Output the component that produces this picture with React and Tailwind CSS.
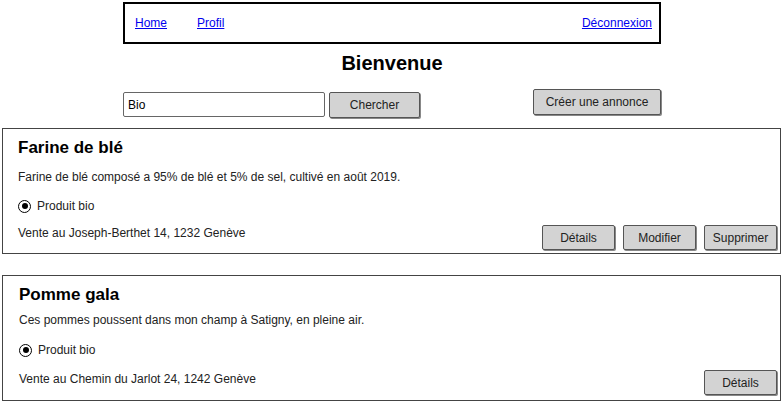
const ANNONCES = [
  {
    id: 1,
    title: "Farine de blé",
    text: "Farine de blé composé a 95% de blé et 5% de sel, cultivé en août 2019.",
    address: "Vente au Joseph-Berthet 14, 1232 Genève",
    owner: true,
    sp: { pl: "pl-[15px]", desc: "mt-[10px]", radio: "mt-[11px]", row: "mt-[9px]", addr: "mb-[8px]", pb: "pb-[3px]" },
  },
  {
    id: 2,
    title: "Pomme gala",
    text: "Ces pommes poussent dans mon champ à Satigny, en pleine air.",
    address: "Vente au Chemin du Jarlot 24, 1242 Genève",
    owner: false,
    sp: { pl: "pl-[16px]", desc: "mt-[6px]", radio: "mt-[12px]", row: "mt-[11px]", addr: "mb-[7px]", pb: "pb-[5px]" },
  },
];

function Btn({ children, className = "" }) {
  return (
    <button className={`h-[25px] bg-[#d3d3d3] border border-[#555] rounded-[2px] text-[12px] text-[#222] shadow-[1px_1px_0_#888] ${className}`}>
      {children}
    </button>
  );
}

function Radio() {
  return (
    <span className="w-[13px] h-[13px] rounded-full border-[1.5px] border-black flex items-center justify-center shrink-0">
      <span className="w-[6px] h-[6px] rounded-full bg-black" />
    </span>
  );
}

function Card({ a }) {
  const s = a.sp;
  return (
    <div className={`ml-[2px] w-[779px] border border-[#444] pr-[3px] pt-[9px] ${s.pl} ${s.pb}`}>
      <h2 className="text-[17px] font-bold leading-[20px] text-black">{a.title}</h2>
      <p className={`${s.desc} leading-[18px] text-[12px] text-[#222]`}>{a.text}</p>
      <div className={`${s.radio} flex items-center gap-[6px] leading-[18px] text-[12px] text-[#222]`}>
        <Radio />
        <span>Produit bio</span>
      </div>
      <div className={`${s.row} flex items-end justify-between`}>
        <p className={`${s.addr} leading-[18px] text-[12px] text-[#222]`}>{a.address}</p>
        <div className="flex gap-[8px]">
          <Btn className="w-[73px]">Détails</Btn>
          {a.owner && <Btn className="w-[73px]">Modifier</Btn>}
          {a.owner && <Btn className="w-[73px]">Supprimer</Btn>}
        </div>
      </div>
    </div>
  );
}

export default function App() {
  return (
    <div className="w-[784px] h-[405px] bg-white overflow-hidden font-['Liberation_Sans',Arial,sans-serif]">
      <div className="w-[538px] mx-auto pt-[2px]">
        <nav className="h-[42px] border-2 border-black flex items-center pl-[10px] pr-[7px] text-[12px]">
          <a href="#" className="text-[#0000ee] underline">Home</a>
          <a href="#" className="ml-[30px] text-[#0000ee] underline">Profil</a>
          <a href="#" className="ml-auto text-[#0000ee] underline">Déconnexion</a>
        </nav>
        <h1 className="mt-[6px] text-center text-[20px] font-bold leading-[26px] text-black">Bienvenue</h1>
        <div className="mt-[13px] flex items-start">
          <input
            defaultValue="Bio"
            className="mt-[3px] w-[202px] h-[25px] border border-[#666] rounded-[2px] px-[4px] text-[12px] text-black outline-none"
          />
          <Btn className="mt-[3px] ml-[4px] w-[91px] h-[26px]">Chercher</Btn>
          <Btn className="ml-auto w-[128px] h-[26px]">Créer une annonce</Btn>
        </div>
      </div>
      <div className="mt-[10px] flex flex-col gap-[21px]">
        {ANNONCES.map(a => <Card key={a.id} a={a} />)}
      </div>
    </div>
  );
}
